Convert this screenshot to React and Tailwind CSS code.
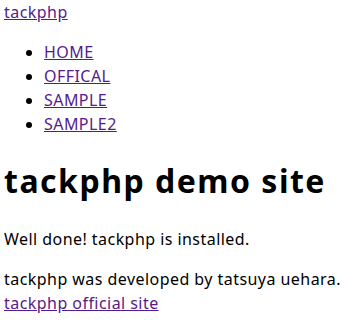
export default function App() {
  const nav = ["HOME", "OFFICAL", "SAMPLE", "SAMPLE2"];
  return (
    <div className="pl-1 pr-1 text-black font-['Noto_Sans',sans-serif] text-[16px] leading-6 tracking-[0.45px]">
      {/* ヘッダー */}
      <div>
        <a href="#" className="text-[#551a8b] underline">
          tackphp
        </a>
      </div>

      {/* ナビゲーション */}
      <ul className="list-disc pl-10 my-4">
        {nav.map((item) => (
          <li key={item}>
            <a href="#" className="text-[#551a8b] underline">
              {item}
            </a>
          </li>
        ))}
      </ul>

      <h1 className="text-[32px] leading-[48px] font-bold tracking-[1.5px] mt-[21.44px] mb-[21.44px]">
        tackphp demo site
      </h1>

      <p className="my-4">Well done! tackphp is installed.</p>
      <p className="my-4">
        tackphp was developed by tatsuya uehara.
        <br />
        <a href="#" className="text-[#551a8b] underline">
          tackphp official site
        </a>
      </p>
    </div>
  );
}
